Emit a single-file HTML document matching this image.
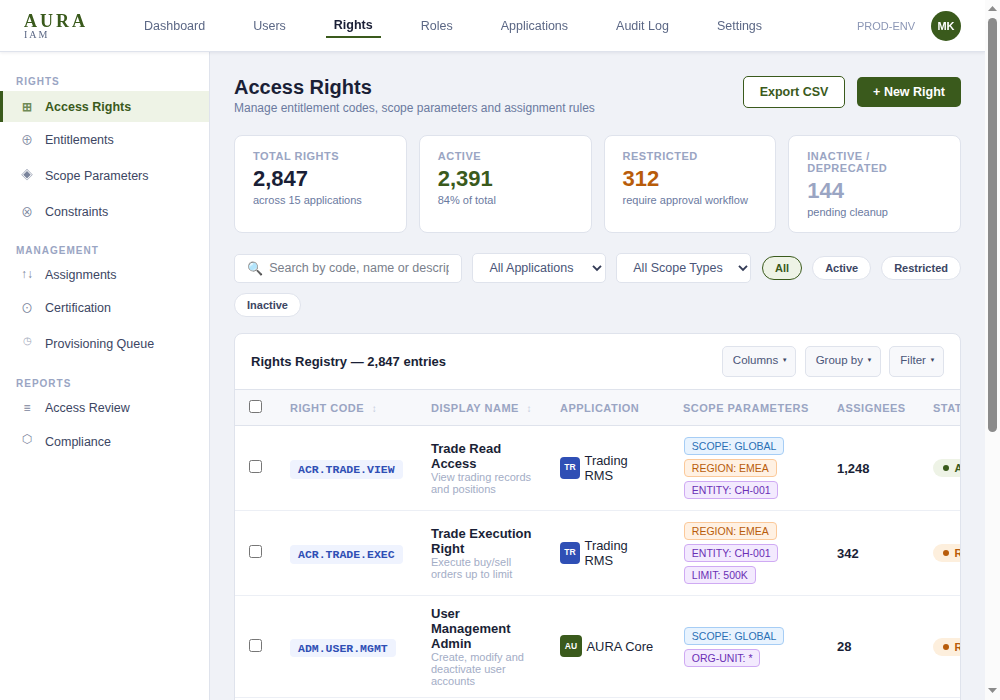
<!DOCTYPE html>
<html lang="en">
<head>
<meta charset="utf-8">
<title>AURA IAM — Access Rights</title>
<style>
*{box-sizing:border-box;margin:0;padding:0}
html,body{font-family:"Liberation Sans",sans-serif;font-size:13px;color:#1a1f36;background:#f0f2f7;width:1000px;height:700px;overflow:hidden}
.page{position:absolute;left:0;top:0;width:985px;height:700px;overflow:hidden}
.sb{position:absolute;left:985px;top:0;width:15px;height:700px;background:#fbfbfb}
.sb i{position:absolute;left:3px;width:9px;top:18px;height:414px;background:#8b8b8b;border-radius:4.5px}
.sb svg{position:absolute;left:0;top:0}
.topbar{position:sticky;top:0;z-index:10;height:52px;background:#fff;border-bottom:1px solid #dfe3ec;box-shadow:0 1px 3px rgba(20,30,60,.08);display:flex;align-items:center;padding:0 24px}
.logo{width:120px;font-family:"Liberation Serif",serif;color:#3a5a1c;line-height:1}
.logo b{display:block;font-size:18px;letter-spacing:3px;font-weight:700}
.logo i{display:block;font-style:normal;font-size:10px;letter-spacing:2px;color:#5b6785;margin-top:0}
.nav{display:flex;height:52px;align-items:center}
.nav a{color:#5b6785;text-decoration:none;font-size:12.5px;margin-right:48px;padding:7px 0 5px;border-bottom:2px solid transparent}
.nav a.on{color:#1a1f36;font-weight:700;border-bottom-color:#3a5a1c;padding:7px 8px 4px;margin-left:-8px;margin-right:40px;position:relative;top:-1px;margin-bottom:1px}
.tr{margin-left:auto;display:flex;align-items:center}
.env{font-size:11px;color:#8b96b5;margin-right:16px}
.av{width:30px;height:30px;border-radius:50%;background:#3a5a1c;color:#fff;font-weight:700;font-size:11px;display:flex;align-items:center;justify-content:center}
.wrap{display:flex;align-items:stretch}
.side{width:210px;flex:none;background:#fff;border-right:1px solid #dfe3ec;position:relative;height:648px}
.side h6{position:absolute;left:16px;font-size:10px;letter-spacing:1px;color:#9aa5c3;font-weight:700;line-height:12px;height:12px}
.side a{position:absolute;left:0;width:209px;height:31px;line-height:33px;color:#3c4663;font-size:12.5px;text-decoration:none;padding-left:42px;border-left:3px solid transparent;white-space:nowrap}
.side a span{position:absolute;left:15px;top:0;width:18px;text-align:center;font-size:12px;color:#7a849c;line-height:31px}
.side .dj{font-family:"DejaVu Sans",sans-serif}.side .nt{font-family:"Noto Sans CJK SC",sans-serif}.side .wq{font-family:"WenQuanYi Zen Hei",sans-serif}
.side a.on{background:#eef3e6;border-left-color:#3a5a1c;color:#3a5a1c;font-weight:700}
.side a.on span{color:#6f8a56}
.main{flex:1;min-width:0;padding:23px 24px 40px 24px}

.ph{display:flex;justify-content:space-between;align-items:flex-start;margin-bottom:19px}
.ph h1{font-size:20px;font-weight:700;line-height:24px;color:#1a1f36}
.ph p{font-size:12px;color:#6b7a9f;margin-top:2px;line-height:15px}
.btns{display:flex;gap:12px;align-items:center;margin-top:1px}
.btn{height:32px;padding:0 15.7px;border-radius:5px;font-size:12.5px;font-weight:700;display:flex;align-items:center;border:1px solid #3a5a1c;background:#fff;color:#3a5a1c;font-family:inherit}
.btn.p{background:#3a5a1c;color:#fff;border:0;height:30px;padding:0 16px}
.stats{display:flex;gap:12px;margin-bottom:20px}
.st{flex:1;background:#fff;border:1px solid #dfe3ec;border-radius:8px;padding:14px 18px 13px;height:98px}
.st h5{font-size:11px;letter-spacing:.5px;color:#9aa5c3;font-weight:700;line-height:12px;text-transform:uppercase}
.st b{display:block;font-size:22px;line-height:26px;margin-top:4px;color:#1a1f36}
.st small{display:block;font-size:11px;color:#6b7a9f;line-height:14px;margin-top:1px}
.filters{display:flex;flex-wrap:wrap;gap:10px 10px;align-items:center;margin-bottom:16px}
.search{width:228px;height:29px;border:1px solid #dfe3ec;border-radius:5px;background:#fff;display:flex;align-items:center;padding:0 12px 0 13px;font-size:12.5px;color:#7a7f8c;overflow:hidden;white-space:nowrap}
.search em{font-style:normal;margin-right:7px;font-size:13px;color:#8a93a8;width:15px;flex:none;margin-left:-.8px;position:relative;top:.5px}
.search span{overflow:hidden;display:block;flex:1}
.sel{height:30px;border:1px solid #dfe3ec;border-radius:5px;background:#fff;display:flex;align-items:center;padding:0 0 0 16px;font-size:12.5px;color:#4a5578;width:133.5px;position:relative;margin-left:.4px}
.sel svg{position:absolute;right:.5px;top:9px}
.chip{height:24px;border:1px solid #dfe3ec;border-radius:12px;background:#fff;padding:0 12px;font-size:11px;font-weight:700;color:#3c4663;display:flex;align-items:center}
.chip.on{background:#eef3e6;border-color:#3a5a1c;color:#3a5a1c}

.card{background:#fff;border:1px solid #dfe3ec;border-radius:8px;overflow:hidden;width:727px}
.ch{height:56px;display:flex;align-items:center;justify-content:space-between;padding:0 16px;border-bottom:1px solid #dfe3ec}
.ch h3{font-size:13px;font-weight:700;color:#1a1f36}
.ch div{display:flex;gap:8.3px}
.tb{height:30px;border:1px solid #dfe3ec;border-radius:5px;background:#f7f8fb;color:#4a5578;font-size:11.5px;padding:0 10px 2px;margin-top:-1px;height:31px;display:flex;align-items:center;font-family:inherit}
.tb i{font-style:normal;font-size:6px;margin-left:3.6px;position:relative;top:0;width:3.5px;overflow:visible;color:#3c4663}
table{border-collapse:collapse;table-layout:fixed;width:1010px}
th{height:35px;padding-top:2px !important;background:#f7f8fb;border-bottom:1px solid #dfe3ec;text-align:left;padding:0 12px;font-size:11px;letter-spacing:.5px;color:#9aa5c3;font-weight:700;white-space:nowrap;text-transform:uppercase}
th i{font-style:normal;font-size:10px;margin-left:4px;color:#c3cadb;font-weight:400;letter-spacing:0}
td{padding:0 12px;border-bottom:1px solid #eceff5;vertical-align:middle;font-size:13px}
th:first-child,td:first-child{padding:0 0 0 14px}
th .cb{margin-top:-3px}
.cb{display:block;width:13px;height:13px;border:1px solid #767676;border-radius:2.5px;background:#fff}
td .cb{position:relative;top:-1px}
.code{display:inline-block;font-family:"Liberation Mono",monospace;font-weight:700;font-size:11.5px;color:#2f4fb5;background:#eff3fe;border-radius:4px;padding:0 8px;line-height:19px;height:18.5px;white-space:nowrap;position:relative;top:2px}
.nm{font-weight:700;font-size:13px;line-height:15px;color:#1a1f36}
.ds{font-size:11px;line-height:12px;color:#a3adc6}
.app{display:flex;align-items:center;gap:4.5px;line-height:15px;color:#1a1f36;font-size:12.9px}
.app i{flex:none;width:20px;height:22px;border-radius:4px;background:#2f4fb5;color:#fff;font-style:normal;font-weight:700;font-size:8.5px;display:flex;align-items:center;justify-content:center}
.tg{display:block;width:fit-content;font-size:10.5px;line-height:16px;height:18px;border:1px solid;border-radius:4px;padding:0 6.8px;margin:0 0 4px 1px;white-space:nowrap}
.tg:last-child{margin-bottom:0}
.tg.b{background:#e8f3fe;border-color:#a6cdf5;color:#2a6fb5}
.tg.o{background:#fff1e3;border-color:#fbc99a;color:#b85c0a}
.tg.p{background:#f3eafe;border-color:#cfaaf3;color:#6b2fb5}
.as{font-weight:700}
.stt{display:inline-flex;align-items:center;height:18px;border-radius:9px;padding:0 10px 0 10px;font-size:11px;font-weight:700;white-space:nowrap;vertical-align:middle}
.stt:before{content:"";width:6px;height:6px;border-radius:50%;background:currentColor;margin-right:5.5px}
.stt.a{background:#eef3e6;color:#3a5a1c}
.stt.r{background:#fdefdd;color:#b85c0a}
</style>
</head>
<body>
<div class="page">
<div class="topbar">
  <div class="logo"><b>AURA</b><i>IAM</i></div>
  <div class="nav">
    <a>Dashboard</a><a>Users</a><a class="on">Rights</a><a>Roles</a><a>Applications</a><a>Audit Log</a><a>Settings</a>
  </div>
  <div class="tr"><span class="env">PROD-ENV</span><div class="av">MK</div></div>
</div>
<div class="wrap">
  <div class="side">
    <h6 style="top:23.5px">RIGHTS</h6>
    <a class="on" style="top:39px"><span style="top:1px">&#8862;</span>Access Rights</a>
    <a style="top:72px"><span class="nt">&#8853;</span>Entitlements</a>
    <a style="top:108px"><span class="wq">&#9672;</span>Scope Parameters</a>
    <a style="top:144px"><span class="nt">&#8855;</span>Constraints</a>
    <h6 style="top:192.5px">MANAGEMENT</h6>
    <a style="top:207px"><span>&#8593;&#8595;</span>Assignments</a>
    <a style="top:240px"><span class="nt">&#8857;</span>Certification</a>
    <a style="top:276px"><span class="wq" style="font-size:10px;top:-3px;color:#a0a8ba">&#9719;</span>Provisioning Queue</a>
    <h6 style="top:326px">REPORTS</h6>
    <a style="top:340px"><span style="top:1px">&#8801;</span>Access Review</a>
    <a style="top:374px"><span class="dj" style="top:-2px">&#11041;</span>Compliance</a>
  </div>
  <div class="main">
  <div class="ph">
      <div><h1>Access Rights</h1><p>Manage entitlement codes, scope parameters and assignment rules</p></div>
      <div class="btns"><button class="btn">Export CSV</button><button class="btn p">+ New Right</button></div>
    </div>
    <div class="stats">
      <div class="st"><h5>Total Rights</h5><b>2,847</b><small>across 15 applications</small></div>
      <div class="st"><h5>Active</h5><b style="color:#3a5a1c">2,391</b><small>84% of total</small></div>
      <div class="st"><h5>Restricted</h5><b style="color:#b85c0a">312</b><small>require approval workflow</small></div>
      <div class="st"><h5>Inactive / Deprecated</h5><b style="color:#9aa5c3">144</b><small>pending cleanup</small></div>
    </div>
    <div class="filters">
      <div class="search"><em>&#128269;</em><span>Search by code, name or description</span></div>
      <div class="sel">All Applications<svg width="14" height="10" viewBox="0 0 14 10"><path d="M3 2.8 L7 6.8 L11 2.8" fill="none" stroke="#333b56" stroke-width="1.9"/></svg></div>
      <div class="sel" style="width:135px">All Scope Types<svg width="14" height="10" viewBox="0 0 14 10"><path d="M3 2.8 L7 6.8 L11 2.8" fill="none" stroke="#333b56" stroke-width="1.9"/></svg></div>
      <div class="chip on" style="margin-left:.8px">All</div><div class="chip">Active</div><div class="chip">Restricted</div><div class="chip">Inactive</div>
    </div>
    <div class="card">
      <div class="ch"><h3>Rights Registry — 2,847 entries</h3><div><button class="tb">Columns<i>&#9660;</i></button><button class="tb">Group by<i>&#9660;</i></button><button class="tb">Filter<i>&#9660;</i></button></div></div>
      <table>
        <colgroup><col style="width:43px"><col style="width:141px"><col style="width:129px"><col style="width:123px"><col style="width:154px"><col style="width:96px"><col style="width:120px"><col></colgroup>
        <thead><tr><th><span class="cb"></span></th><th>Right Code <i>&#8597;</i></th><th>Display Name <i>&#8597;</i></th><th>Application</th><th>Scope Parameters</th><th>Assignees</th><th>Status</th><th>Last Modified</th></tr></thead>
        <tbody>
          <tr style="height:85px"><td><span class="cb"></span></td><td><span class="code">ACR.TRADE.VIEW</span></td><td><div class="nm">Trade Read Access</div><div class="ds">View trading records and positions</div></td><td><div class="app"><i>TR</i>Trading RMS</div></td><td><span class="tg b">SCOPE: GLOBAL</span><span class="tg o">REGION: EMEA</span><span class="tg p">ENTITY: CH-001</span></td><td class="as"><span style="position:relative;top:1px">1,248</span></td><td><span class="stt a">Active</span></td><td>2024-11-02</td></tr>
          <tr style="height:85px"><td><span class="cb"></span></td><td><span class="code">ACR.TRADE.EXEC</span></td><td><div class="nm">Trade Execution Right</div><div class="ds">Execute buy/sell orders up to limit</div></td><td><div class="app"><i>TR</i>Trading RMS</div></td><td><span class="tg o">REGION: EMEA</span><span class="tg p">ENTITY: CH-001</span><span class="tg p">LIMIT: 500K</span></td><td class="as"><span style="position:relative;top:1px">342</span></td><td><span class="stt r">Restricted</span></td><td>2024-10-28</td></tr>
          <tr style="height:102px"><td><span class="cb"></span></td><td><span class="code">ADM.USER.MGMT</span></td><td><div class="nm">User Management Admin</div><div class="ds">Create, modify and deactivate user accounts</div></td><td><div class="app"><i style="background:#3a5a1c;width:22px">AU</i>AURA Core</div></td><td style="padding-top:2px"><span class="tg b">SCOPE: GLOBAL</span><span class="tg p">ORG-UNIT: *</span></td><td class="as">28</td><td><span class="stt r" style="position:relative;top:1px">Restricted</span></td><td>2024-10-15</td></tr>
          <tr style="height:85px"><td><span class="cb"></span></td><td><span class="code">RPT.AUDIT.READ</span></td><td><div class="nm">Audit Report Viewer</div><div class="ds">Read-only access to audit reports</div></td><td><div class="app"><i style="background:#3a5a1c;width:22px">AU</i>AURA Core</div></td><td><span class="tg b">SCOPE: GLOBAL</span></td><td class="as">96</td><td><span class="stt a">Active</span></td><td>2024-09-30</td></tr>
        </tbody>
      </table>
    </div>
  </div>
</div>
</div>
<div class="sb"><i></i><svg width="15" height="700" viewBox="0 0 15 700"><polygon points="3,11 12,11 7.5,6" fill="#8b8b8b"/><polygon points="3,688 12,688 7.5,693" fill="#8b8b8b"/></svg></div>
</body>
</html>
